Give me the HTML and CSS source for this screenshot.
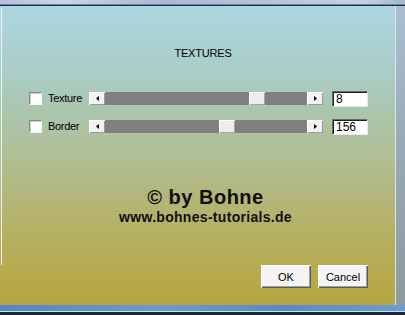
FILE: index.html
```html
<!DOCTYPE html>
<html>
<head>
<meta charset="utf-8">
<link rel="stylesheet" href="styles.css">
</head>
<body>
<div class="window">
  <div class="frame-top"></div>
  <div class="middle">
    <div class="client">
      <div class="title">TEXTURES</div>
      <div class="rows">
        <div class="row">
          <span class="check"></span>
          <span class="label">Texture</span>
          <div class="scroll">
            <span class="arrow"><svg width="3" height="5" viewBox="0 0 3 5"><path d="M3 0V5L0 2.5Z" fill="#000"/></svg></span>
            <div class="track"><span class="thumb" style="margin-left:144px"></span></div>
            <span class="arrow"><svg width="3" height="5" viewBox="0 0 3 5"><path d="M0 0V5L3 2.5Z" fill="#000"/></svg></span>
          </div>
          <div class="edit">8</div>
        </div>
        <div class="row">
          <span class="check"></span>
          <span class="label">Border</span>
          <div class="scroll">
            <span class="arrow"><svg width="3" height="5" viewBox="0 0 3 5"><path d="M3 0V5L0 2.5Z" fill="#000"/></svg></span>
            <div class="track"><span class="thumb" style="margin-left:114px"></span></div>
            <span class="arrow"><svg width="3" height="5" viewBox="0 0 3 5"><path d="M0 0V5L3 2.5Z" fill="#000"/></svg></span>
          </div>
          <div class="edit">156</div>
        </div>
      </div>
      <div class="credit">
        <div class="credit-main">© by Bohne</div>
        <div class="credit-url">www.bohnes-tutorials.de</div>
      </div>
      <div class="buttons">
        <button class="btn">OK</button>
        <button class="btn">Cancel</button>
      </div>
    </div>
    <div class="edge"></div>
    <div class="frame-right"></div>
  </div>
  <div class="frame-bottom"></div>
</div>
</body>
</html>
```

FILE: styles.css
```css
* { box-sizing: border-box; }
html, body { margin: 0; padding: 0; }
body {
  width: 405px;
  height: 315px;
  overflow: hidden;
  font-family: "Liberation Sans", Arial, sans-serif;
  font-size: 11px;
  color: #000;
}
.window {
  width: 405px;
  height: 315px;
  display: flex;
  flex-direction: column;
}
.frame-top {
  height: 6px;
  flex: none;
  background:
    linear-gradient(to bottom, transparent 0, transparent 4px, #6d7c98 4px, #6d7c98 5px, #26324a 5px),
    linear-gradient(to right, #b3c2da 0%, #c9d5e6 15%, #aab9d4 40%, #b8c6dc 70%, #c6d2e4 90%, #a8b6cc 100%);
}
.middle {
  flex: 1;
  display: flex;
  min-height: 0;
}
.client {
  flex: 1;
  display: flex;
  flex-direction: column;
  padding: 40px 0 17px 0;
  background:
    linear-gradient(#eef4f4, #eef4f4) 1px 2px / 1px 257px no-repeat,
    linear-gradient(to bottom, #acd6e2 0%, #aacdc6 22%, #abc6ae 35%, #b0bf95 50%, #b3b77e 62%, #b6ae5c 80%, #b5a63e 100%);
}
.edge { width: 1px; background: #dde6e8; }
.frame-right {
  width: 9px;
  background: linear-gradient(to bottom, #a9bfd0, #98a8b4 50%, #8c9aa0);
}
.frame-bottom {
  height: 10px;
  flex: none;
  background:
    linear-gradient(to bottom, transparent 0, transparent 6px, #d0dce8 6px, #d0dce8 7px, #1b2636 7px),
    linear-gradient(to right, #5686c2, #6a9ad0 40%, #5a8ac6 70%, #6c9cd2);
}
.title {
  height: 14px;
  line-height: 14px;
  text-align: center;
  padding-left: 11px;
  letter-spacing: -0.2px;
}
.rows {
  margin-top: 31px;
  padding-left: 29px;
  display: flex;
  flex-direction: column;
  gap: 13px;
}
.row {
  height: 15px;
  display: flex;
  align-items: center;
}
.check {
  width: 13px;
  height: 13px;
  background: #fff;
  border-top: 1px solid #8a8a8a;
  border-left: 1px solid #8a8a8a;
  border-right: 1px solid #f4f4f4;
  border-bottom: 1px solid #f4f4f4;
  box-shadow: inset 1px 1px 0 #c8c8c8;
}
.label {
  width: 47px;
  padding-left: 6px;
  letter-spacing: -0.3px;
  line-height: 13px;
}
.scroll {
  width: 234px;
  height: 13px;
  display: flex;
}
.arrow {
  width: 16px;
  height: 13px;
  flex: none;
  display: flex;
  align-items: center;
  justify-content: center;
  background: #f2f2f2;
  box-shadow: inset 1px 1px 0 #fff, inset -1px -1px 0 #9a9a9a;
}
.track {
  flex: 1;
  background: #808080;
  display: flex;
}
.thumb {
  width: 16px;
  height: 13px;
  background: #ececec;
  box-shadow: inset 1px 1px 0 #fff, inset -1px -1px 0 #a6a6a6;
}
.edit {
  margin-left: 9px;
  width: 36px;
  height: 16px;
  background: #fff;
  border-top: 1px solid #6a6a6a;
  border-left: 1px solid #6a6a6a;
  border-right: 1px solid #e8e8e8;
  border-bottom: 1px solid #e8e8e8;
  box-shadow: inset 1px 1px 0 #202020;
  padding-left: 3px;
  line-height: 14px;
  font-size: 12px;
}
.credit {
  margin-top: 52px;
  padding-left: 16px;
  text-align: center;
  font-family: "Liberation Sans", Arial, sans-serif;
  font-weight: bold;
  color: #111;
}
.credit-main {
  font-size: 20px;
  line-height: 22px;
  letter-spacing: 0.5px;
}
.credit-url {
  margin-top: 1px;
  font-size: 14px;
  line-height: 16px;
  letter-spacing: 0.3px;
}
.buttons {
  margin-top: 40px;
  display: flex;
  justify-content: flex-end;
  gap: 7px;
  padding-right: 27px;
}
.btn {
  width: 50px;
  height: 23px;
  padding: 0;
  margin: 0;
  border: none;
  font-family: "Liberation Sans", Arial, sans-serif;
  font-size: 11px;
  color: #000;
  background: #f4f4f4;
  box-shadow: inset 1px 1px 0 #fff, inset -1px -1px 0 #5a5a5a, inset -2px -2px 0 #a0a0a0;
}
```
